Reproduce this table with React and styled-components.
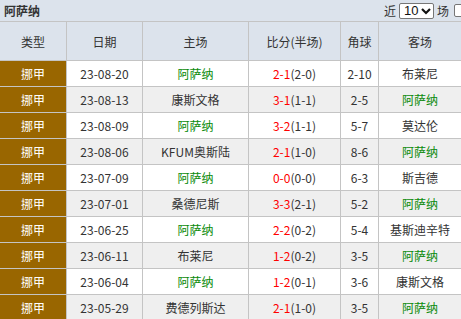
import React from 'react'
import styled, { createGlobalStyle } from 'styled-components'

const GlobalStyle = createGlobalStyle`
    body {
        margin: 0;
        background: #fff;
        font-family: "Noto Sans CJK SC", "Noto Sans", sans-serif;
        color: #333;
    }
`

const matches = [
    {date: '23-08-20', home: '阿萨纳', ft: '2-1', ht: '(2-0)', corner: '2-10', away: '布莱尼'},
    {date: '23-08-13', home: '康斯文格', ft: '3-1', ht: '(1-1)', corner: '2-5', away: '阿萨纳'},
    {date: '23-08-09', home: '阿萨纳', ft: '3-2', ht: '(1-1)', corner: '5-7', away: '莫达伦'},
    {date: '23-08-06', home: 'KFUM奥斯陆', ft: '2-1', ht: '(1-0)', corner: '8-6', away: '阿萨纳'},
    {date: '23-07-09', home: '阿萨纳', ft: '0-0', ht: '(0-0)', corner: '6-3', away: '斯吉德'},
    {date: '23-07-01', home: '桑德尼斯', ft: '3-3', ht: '(2-1)', corner: '5-2', away: '阿萨纳'},
    {date: '23-06-25', home: '阿萨纳', ft: '2-2', ht: '(0-2)', corner: '5-4', away: '基斯迪辛特'},
    {date: '23-06-11', home: '布莱尼', ft: '1-2', ht: '(0-2)', corner: '3-5', away: '阿萨纳'},
    {date: '23-06-04', home: '阿萨纳', ft: '1-2', ht: '(0-1)', corner: '3-6', away: '康斯文格'},
    {date: '23-05-29', home: '费德列斯达', ft: '2-1', ht: '(1-0)', corner: '3-5', away: '阿萨纳'},
]

const TEAM = '阿萨纳'

function App() {
    return (
        <Wrapper>
            <GlobalStyle />
            <TitleBar>
                <Title>{TEAM}</Title>
                <Filter>
                    <span>近</span>
                    <FakeSelect>
                        10
                        <svg width="10" height="8" viewBox="0 0 10 8">
                            <path d="M1 2 L5 6 L9 2" fill="none" stroke="#111" strokeWidth="2.2" />
                        </svg>
                    </FakeSelect>
                    <span>场</span>
                    <Check />
                </Filter>
            </TitleBar>
            <Grid>
                <Head>类型</Head>
                <Head>日期</Head>
                <Head>主场</Head>
                <Head>比分(半场)</Head>
                <Head>角球</Head>
                <Head>客场</Head>
                {matches.map((m, i) => {
                    const alt = i % 2 === 1
                    return (
                        <React.Fragment key={m.date}>
                            <League>挪甲</League>
                            <Cell $alt={alt}>{m.date}</Cell>
                            <Cell $alt={alt} $green={m.home === TEAM}>{m.home}</Cell>
                            <Cell $alt={alt}><Red>{m.ft}</Red>{m.ht}</Cell>
                            <Cell $alt={alt}>{m.corner}</Cell>
                            <Cell $alt={alt} $green={m.away === TEAM}>{m.away}</Cell>
                        </React.Fragment>
                    )
                })}
            </Grid>
        </Wrapper>
    )
}

export default App

const Wrapper = styled.div`
    width: 461px;
    height: 319px;
    overflow: hidden;
    font-size: 12px;
`

const TitleBar = styled.div`
    height: 21px;
    background: #dce3ec;
    border-bottom: 1px solid #c4c4c4;
    display: flex;
    align-items: center;
    justify-content: space-between;
    padding-left: 4px;
`

const Title = styled.div`
    font-weight: bold;
    font-size: 12px;
    color: #333;
`

const Filter = styled.div`
    display: flex;
    align-items: center;
    gap: 2px;
    font-size: 12px;
    color: #333;
    margin-right: -6px;
`

const FakeSelect = styled.div`
    width: 35px;
    height: 16px;
    border: 1px solid #767676;
    border-radius: 2px;
    background: #fff;
    display: flex;
    align-items: center;
    justify-content: space-between;
    padding: 0 2px 0 4px;
    box-sizing: border-box;
    font-family: "Liberation Sans", sans-serif;
    font-size: 13px;
    color: #111;
    margin: 0 1px;
`

const Check = styled.span`
    width: 13px;
    height: 13px;
    border: 1px solid #767676;
    border-radius: 2px;
    background: #fff;
    margin-left: 3px;
    box-sizing: border-box;
`

const Grid = styled.div`
    display: grid;
    grid-template-columns: 66px 75px 105px 91px 37px 82px;
    grid-template-rows: 38px;
    grid-auto-rows: 25px;
    gap: 1px;
    background: #c4c4c4;
`

const Head = styled.div`
    background: #dce3ec;
    display: flex;
    align-items: center;
    justify-content: center;
    color: #333;
    font-size: 12px;
`

const Cell = styled.div`
    background: ${p => (p.$alt ? '#efefef' : '#fff')};
    color: ${p => (p.$green ? '#0a8a0a' : '#333')};
    display: flex;
    align-items: center;
    justify-content: center;
    white-space: nowrap;
`

const League = styled.div`
    background: #996600;
    color: #fff;
    display: flex;
    align-items: center;
    justify-content: center;
`

const Red = styled.span`
    color: #f00;
`
